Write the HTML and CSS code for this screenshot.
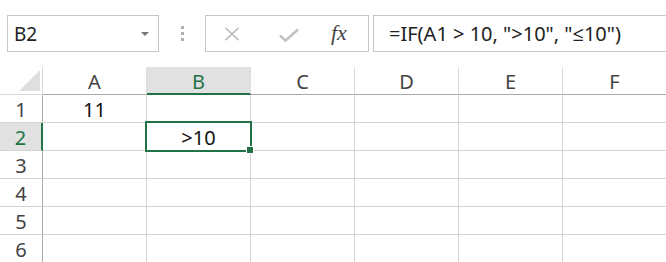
FILE: index.html
```html
<!DOCTYPE html>
<html lang="en">
  <head>
    <meta charset="UTF-8" />
    <title>Sheet</title>
    <link rel="stylesheet" href="styles.css">
  </head>
  <body>
    <div class="toolbar">
      <div class="name-box">
        <span>B2</span>
        <span class="caret"></span>
      </div>
      <div class="grip"><i></i><i></i><i></i></div>
      <div class="fx-buttons">
        <svg class="icon-cancel" width="16" height="14" viewBox="0 0 16 14">
          <path d="M1.5 0.8 L14.5 13.2 M14.5 0.8 L1.5 13.2" />
        </svg>
        <svg class="icon-enter" width="20" height="14" viewBox="0 0 20 14">
          <path d="M1 7.5 L6.5 12.5 L19 1.5" />
        </svg>
        <span class="fx">fx</span>
      </div>
      <div class="formula">=IF(A1 &gt; 10, "&gt;10", "≤10")</div>
    </div>

    <div class="sheet">
      <div class="corner"><span class="corner-mark"></span></div>
      <div class="col-head">A</div>
      <div class="col-head active">B</div>
      <div class="col-head">C</div>
      <div class="col-head">D</div>
      <div class="col-head">E</div>
      <div class="col-head">F</div>

      <div class="row-head">1</div>
      <div class="cell">11</div>
      <div class="cell"></div>
      <div class="cell"></div>
      <div class="cell"></div>
      <div class="cell"></div>
      <div class="cell"></div>

      <div class="row-head active">2</div>
      <div class="cell"></div>
      <div class="cell selected">&gt;10<span class="fill-handle"></span></div>
      <div class="cell"></div>
      <div class="cell"></div>
      <div class="cell"></div>
      <div class="cell"></div>

      <div class="row-head">3</div>
      <div class="cell"></div>
      <div class="cell"></div>
      <div class="cell"></div>
      <div class="cell"></div>
      <div class="cell"></div>
      <div class="cell"></div>

      <div class="row-head">4</div>
      <div class="cell"></div>
      <div class="cell"></div>
      <div class="cell"></div>
      <div class="cell"></div>
      <div class="cell"></div>
      <div class="cell"></div>

      <div class="row-head">5</div>
      <div class="cell"></div>
      <div class="cell"></div>
      <div class="cell"></div>
      <div class="cell"></div>
      <div class="cell"></div>
      <div class="cell"></div>

      <div class="row-head">6</div>
      <div class="cell"></div>
      <div class="cell"></div>
      <div class="cell"></div>
      <div class="cell"></div>
      <div class="cell"></div>
      <div class="cell"></div>
    </div>
  </body>
</html>
```

FILE: styles.css
```css
body {
  margin: 0;
  background: #fff;
  font-family: "Noto Sans", "Open Sans", sans-serif;
  color: #222;
  overflow: hidden;
  width: 666px;
  height: 262px;
}

.toolbar {
  display: flex;
  align-items: stretch;
  height: 37px;
  padding-top: 15px;
  padding-left: 7px;
}

.name-box {
  box-sizing: border-box;
  width: 152px;
  border: 1px solid #c6c6c6;
  display: flex;
  align-items: center;
  justify-content: space-between;
  padding: 0 9px 0 6px;
  font-size: 19px;
  color: #222;
}

.caret {
  width: 0;
  height: 0;
  border-left: 4px solid transparent;
  border-right: 4px solid transparent;
  border-top: 4px solid #777;
  margin-top: 1px;
}

.grip {
  width: 45px;
  display: flex;
  flex-direction: column;
  align-items: center;
  justify-content: center;
  gap: 3px;
  padding-left: 1px;
}

.grip i {
  display: block;
  width: 3px;
  height: 3px;
  background: #b0b0b0;
}

.fx-buttons {
  box-sizing: border-box;
  width: 164px;
  border: 1px solid #c6c6c6;
  display: flex;
  align-items: center;
  padding-left: 18px;
}

.fx-buttons svg {
  fill: none;
  stroke: #c2c2c2;
  stroke-width: 1.8;
}

.icon-enter {
  margin-left: 39px;
  margin-top: 2px;
  stroke-width: 2.6 !important;
}

.fx {
  margin-left: 32px;
  font-family: "Liberation Serif", "DejaVu Serif", serif;
  font-style: italic;
  font-size: 22px;
  color: #444;
  margin-top: -2px;
}

.formula {
  box-sizing: border-box;
  flex: 1;
  margin-left: 4px;
  margin-right: -2px;
  border: 1px solid #c6c6c6;
  display: flex;
  align-items: center;
  padding-left: 15px;
  font-size: 20px;
  color: #222;
  white-space: nowrap;
}

.sheet {
  margin-top: 15px;
  display: grid;
  grid-template-columns: 43px repeat(6, 104px);
  grid-template-rows: repeat(7, 28px);
  font-size: 20px;
}

.sheet > div {
  box-sizing: border-box;
  display: flex;
  align-items: center;
  justify-content: center;
  padding-top: 2px;
}

.corner {
  position: relative;
  border-right: 1px solid #d8d8d8;
  border-bottom: 1px solid #d8d8d8;
}

.corner-mark {
  position: absolute;
  left: 19px;
  top: 3px;
  width: 0;
  height: 0;
  border-left: 21px solid transparent;
  border-bottom: 21px solid #dfdfdf;
}

.col-head {
  border-right: 1px solid #dcdcdc;
  border-bottom: 1px solid #ababab;
  color: #444;
}

.col-head.active {
  background: #e1e1e1;
  color: #217346;
  border-bottom: 2px solid #217346;
}

.row-head {
  border-right: 1px solid #ababab;
  border-bottom: 1px solid #d4d4d4;
  color: #444;
}

.row-head.active {
  background: #e1e1e1;
  color: #217346;
  border-right: 2px solid #217346;
}

.cell {
  border-right: 1px solid #d4d4d4;
  border-bottom: 1px solid #d4d4d4;
  color: #111;
}

.cell.selected {
  position: relative;
}

.cell.selected::after {
  content: "";
  position: absolute;
  top: -2px;
  left: -2px;
  right: -2px;
  bottom: -2px;
  border: 2px solid #217346;
}

.fill-handle {
  position: absolute;
  right: -3px;
  bottom: -3px;
  width: 6px;
  height: 6px;
  background: #217346;
  box-shadow: 0 0 0 1px #fff;
  z-index: 1;
}
```
